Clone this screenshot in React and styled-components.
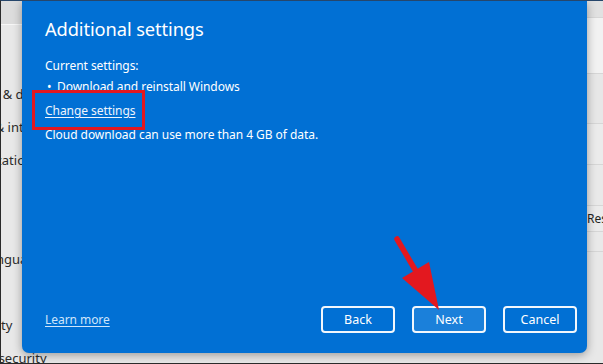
import React from 'react';
import styled, { createGlobalStyle } from 'styled-components';

const GlobalStyle = createGlobalStyle`
  html, body {
    margin: 0;
    padding: 0;
  }

  body {
    width: 603px;
    height: 364px;
    overflow: hidden;
    background: #e9e9e9;
    font-family: "Noto Sans", "Open Sans", sans-serif;
  }
`;

const Screen = styled.div`
  position: relative;
  display: flex;
  width: 603px;
  height: 364px;
  overflow: hidden;
  box-sizing: border-box;
  background: #e9e9e9;
  border-left: 1px solid #2a2a2a;
  border-top: 1px solid #26466b;
  border-bottom: 1px solid #2a2a2a;
`;

const Sidebar = styled.nav`
  flex: 0 0 260px;
  display: flex;
  flex-direction: column;
  background: #e8e8e8;
`;

const SidebarHeader = styled.div`
  flex-shrink: 0;
  height: 23px;
  background: #dcdcdc;
  border-bottom: 1px solid #f7f7f7;
  margin-bottom: 52px;
`;

const NavItem = styled.div`
  flex-shrink: 0;
  height: 33.1px;
  display: flex;
  align-items: center;
  margin-left: -62px;
  font-size: 13px;
  color: #2b2b2b;
  white-space: nowrap;
`;

const Content = styled.main`
  flex: 0 0 420px;
  display: flex;
  flex-direction: column;
`;

const Band = styled.div`
  height: ${(p) => p.$h}px;
  flex-shrink: 0;
  display: flex;
  align-items: center;
  justify-content: flex-end;
  padding-right: 24px;
  background: ${(p) => p.$bg};
  border-bottom: 1px solid #d6d6d6;
`;

const ResetButton = styled.span`
  width: 70px;
  font-size: 12px;
  color: #222;
  white-space: nowrap;
`;

const Dialog = styled.section`
  position: absolute;
  left: 21px;
  top: 0;
  width: 565px;
  height: 352px;
  box-sizing: border-box;
  display: flex;
  flex-direction: column;
  padding: 14px 10px 20px 23px;
  background: #0170d4;
  border-radius: 0 0 7px 7px;
  box-shadow: 0 2px 10px rgba(0, 0, 0, 0.35);
  color: #fff;
`;

const Title = styled.h1`
  margin: 0 0 12px;
  font-size: 18.3px;
  font-weight: 400;
  line-height: 28px;
  letter-spacing: -0.1px;
`;

const Text = styled.p`
  margin: 0;
  font-size: 12px;
  line-height: 21px;
  letter-spacing: -0.05px;
`;

const Bullet = styled.ul`
  margin: 0;
  padding: 0 0 0 12px;
  list-style: none;

  li {
    position: relative;
    font-size: 12px;
    line-height: 21px;
    letter-spacing: -0.05px;
  }

  li::before {
    content: '•';
    position: absolute;
    left: -10px;
  }
`;

const LinkRow = styled.div`
  margin: 3px 0;
  font-size: 12px;
  line-height: 21px;
`;

const Highlight = styled.span`
  position: relative;
  display: inline-block;
  line-height: 21px;

  &::after {
    content: '';
    position: absolute;
    left: -13px;
    right: -9px;
    top: -10px;
    bottom: -9px;
    border: 3px solid #e3181f;
  }
`;

const Link = styled.a`
  font-size: 12px;
  line-height: 21px;
  letter-spacing: -0.05px;
  color: ${(p) => p.$color};
  text-decoration: underline;
  text-underline-offset: 2px;
  cursor: pointer;
`;

const Footer = styled.footer`
  margin-top: auto;
  display: flex;
  align-items: center;
`;

const Buttons = styled.div`
  margin-left: auto;
  display: flex;
  gap: 17px;
`;

const Button = styled.button`
  width: 74px;
  height: 27px;
  box-sizing: border-box;
  border: 2px solid #f2f7fc;
  border-radius: 4px;
  background: ${(p) => (p.$primary ? '#1b80da' : 'transparent')};
  color: #fff;
  font-family: inherit;
  font-size: 12.5px;
  padding: 0;
`;

const Annotation = styled.svg`
  position: absolute;
  left: 0;
  top: 0;
  pointer-events: none;
`;

const navItems = [
  'Bluetooth & devices',
  'Network & internet',
  'Personalization',
  'Apps',
  'Accounts',
  'Time & language',
  'Gaming',
  'Accessibility',
  'Privacy & security',
];

const bands = [
  { h: 16, bg: '#e1e1e1' },
  { h: 55, bg: '#f2f2f2' },
  { h: 49, bg: '#e7e7e7' },
  { h: 40, bg: '#ebebeb' },
  { h: 40, bg: '#e9e9e9' },
  { h: 25, bg: '#ebebeb', label: 'Reset PC' },
  { h: 19, bg: '#e9e9e9' },
  { h: 120, bg: '#e8e8e8' },
];

const App = () => (
  <>
    <GlobalStyle />
    <Screen>
      <Sidebar>
        <SidebarHeader />
        {navItems.map((item) => (
          <NavItem key={item}>{item}</NavItem>
        ))}
      </Sidebar>
      <Content>
        {bands.map((b, i) => (
          <Band key={i} $h={b.h} $bg={b.bg}>
            {b.label && <ResetButton>{b.label}</ResetButton>}
          </Band>
        ))}
      </Content>

      <Dialog>
        <Title>Additional settings</Title>
        <Text>Current settings:</Text>
        <Bullet>
          <li>Download and reinstall Windows</li>
        </Bullet>
        <LinkRow>
          <Highlight>
            <Link $color='#eef5fd'>Change settings</Link>
          </Highlight>
        </LinkRow>
        <Text>Cloud download can use more than 4 GB of data.</Text>
        <Footer>
          <Link $color='#cfe5fb'>Learn more</Link>
          <Buttons>
            <Button>Back</Button>
            <Button $primary>Next</Button>
            <Button>Cancel</Button>
          </Buttons>
        </Footer>
      </Dialog>

      <Annotation width='603' height='364' viewBox='0 0 603 364'>
        <line x1='396' y1='238' x2='416' y2='272' stroke='#e3181f' strokeWidth='5.5' strokeLinecap='round' />
        <polygon points='401,277 428,261 438,309' fill='#e3181f' />
      </Annotation>
    </Screen>
  </>
);

export default App;
